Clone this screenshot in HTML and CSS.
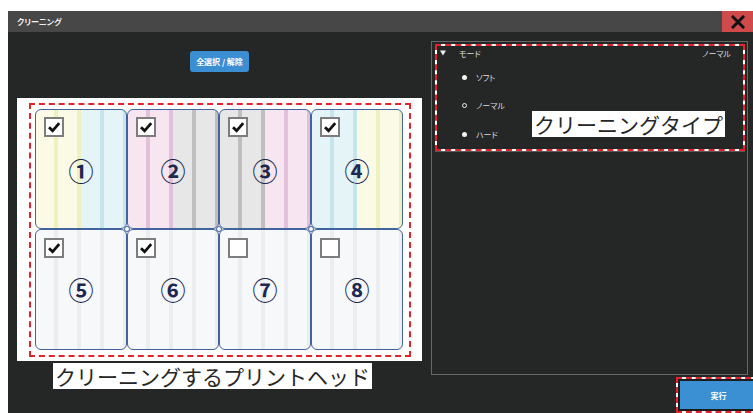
FILE: index.html
```html
<!DOCTYPE html>
<html lang="ja">
<head>
<meta charset="utf-8">
<title>クリーニング</title>
<link rel="stylesheet" href="styles.css">
</head>
<body>
<div class="app">
  <header class="titlebar">
    <span class="title">クリーニング</span>
    <button class="close" aria-label="閉じる">
      <svg width="14" height="14" viewBox="0 0 14 14"><path d="M2 2 L12 12 M12 2 L2 12" stroke="#111" stroke-width="3" stroke-linecap="square" fill="none"/></svg>
    </button>
  </header>
  <div class="main">
    <section class="left">
      <button class="btn-select">全選択 / 解除</button>
      <div class="canvas">
        <div class="mark heads-mark">
          <div class="heads">
            <div class="head h1"><span class="check on"><svg viewBox="0 0 16 16"><path d="M3 8.2 L6.6 11.8 L13.2 4.2"/></svg></span><div class="num">①</div></div>
            <div class="head h2"><span class="check on"><svg viewBox="0 0 16 16"><path d="M3 8.2 L6.6 11.8 L13.2 4.2"/></svg></span><div class="num">②</div></div>
            <div class="head h3"><span class="check on"><svg viewBox="0 0 16 16"><path d="M3 8.2 L6.6 11.8 L13.2 4.2"/></svg></span><div class="num">③</div></div>
            <div class="head h4"><span class="check on"><svg viewBox="0 0 16 16"><path d="M3 8.2 L6.6 11.8 L13.2 4.2"/></svg></span><div class="num">④</div></div>
            <div class="head blank"><span class="check on"><svg viewBox="0 0 16 16"><path d="M3 8.2 L6.6 11.8 L13.2 4.2"/></svg></span><div class="num">⑤</div></div>
            <div class="head blank"><span class="check on"><svg viewBox="0 0 16 16"><path d="M3 8.2 L6.6 11.8 L13.2 4.2"/></svg></span><div class="num">⑥</div></div>
            <div class="head blank"><span class="check"></span><div class="num">⑦</div></div>
            <div class="head blank"><span class="check"></span><div class="num">⑧</div></div>
            <span class="joint j1"></span>
            <span class="joint j2"></span>
            <span class="joint j3"></span>
          </div>
        </div>
      </div>
      <div class="note note-heads">クリーニングするプリントヘッド</div>
    </section>
    <section class="right">
      <div class="panel">
        <div class="mode-wrap">
          <div class="mark mode">
            <div class="mode-head">
              <svg class="tri" width="6" height="6" viewBox="0 0 6 6"><polygon points="0,0.5 6,0.5 3,5.5" fill="#eee"/></svg>
              <span class="mode-name">モード</span>
              <span class="mode-val">ノーマル</span>
            </div>
            <ul class="radios">
              <li class="radio"><span class="dot"></span>ソフト</li>
              <li class="radio"><span class="dot ring"></span>ノーマル</li>
              <li class="radio"><span class="dot"></span>ハード</li>
            </ul>
            <div class="note note-type">クリーニングタイプ</div>
          </div>
        </div>
      </div>
      <div class="mark exec-wrap"><button class="exec">実行</button></div>
    </section>
  </div>
</div>
</body>
</html>
```
FILE: styles.css
```css
body {
  margin: 0;
  padding: 11px 0 0 8px;
  background: #ffffff;
  font-family: "Noto Sans CJK JP", "Noto Sans", sans-serif;
  overflow: hidden;
}

.app {
  width: 745px;
  height: 402px;
  background: #252626;
  overflow: hidden;
}

.titlebar {
  height: 21px;
  background: #474747;
  display: flex;
  align-items: center;
  justify-content: space-between;
}

.title {
  color: #f0f0f0;
  font-size: 8px;
  font-weight: 700;
  padding-left: 9px;
  font-feature-settings: "palt" 1;
}

.close {
  width: 31px;
  height: 21px;
  padding: 0;
  border: 0;
  background: #cf4b4b;
  display: flex;
  align-items: center;
  justify-content: center;
}

.main {
  display: flex;
}

.left {
  width: 423px;
  flex: none;
  padding-left: 9px;
  box-sizing: border-box;
}

.btn-select {
  display: block;
  margin: 19px 0 0 173px;
  width: 59px;
  height: 21px;
  padding: 0;
  border: 0;
  border-radius: 3px;
  background: #3b8ed1;
  color: #ffffff;
  font-family: "Noto Sans CJK JP", sans-serif;
  font-size: 8px;
  font-weight: 700;
}

.canvas {
  margin-top: 26px;
  width: 405px;
  height: 263px;
  box-sizing: border-box;
  padding: 5px 0 0 12px;
  background: #ffffff;
}

.mark {
  border: 2px solid #ffffff;
  outline: 2px dashed #e4222b;
  outline-offset: -2px;
}

.heads-mark {
  width: 382px;
  height: 254px;
  box-sizing: border-box;
  padding: 4px 0 0 4px;
}

.heads {
  position: relative;
  display: grid;
  grid-template-columns: repeat(4, 92px);
  grid-template-rows: 120px 121px;
}

.head {
  box-sizing: border-box;
  border: 1.5px solid #42639e;
  border-radius: 6px;
  padding-top: 7px;
  background-origin: border-box;
}

.h1 {
  background-image: linear-gradient(to right,
    #fafae6 0 19px, #eef0bd 19px 23px, #fafae6 23px 42px, #eef0bd 42px 46px,
    #e5f4f6 46px 65px, #c3e5eb 65px 69px, #e5f4f6 69px 88px, #c3e5eb 88px 92px);
}

.h2 {
  background-image: linear-gradient(to right,
    #f7e5f0 0 19px, #e2bfda 19px 23px, #f7e5f0 23px 42px, #e2bfda 42px 46px,
    #e7e7e7 46px 65px, #bfbfbf 65px 69px, #e7e7e7 69px 88px, #bfbfbf 88px 92px);
}

.h3 {
  background-image: linear-gradient(to right,
    #e7e7e7 0 19px, #bfbfbf 19px 23px, #e7e7e7 23px 42px, #bfbfbf 42px 46px,
    #f7e5f0 46px 65px, #e2bfda 65px 69px, #f7e5f0 69px 88px, #e2bfda 88px 92px);
}

.h4 {
  background-image: linear-gradient(to right,
    #e5f4f6 0 19px, #c3e5eb 19px 23px, #e5f4f6 23px 42px, #c3e5eb 42px 46px,
    #fafae6 46px 65px, #eef0bd 65px 69px, #fafae6 69px 88px, #eef0bd 88px 92px);
}

.blank {
  padding-top: 8px;
  background-image: linear-gradient(to right,
    #f7f8fa 0 19px, #ebedf1 19px 23px, #f7f8fa 23px 42px, #ebedf1 42px 46px,
    #f7f8fa 46px 65px, #ebedf1 65px 69px, #f7f8fa 69px 88px, #ebedf1 88px 92px);
}

.check {
  display: block;
  width: 20px;
  height: 20px;
  margin-left: 8px;
  box-sizing: border-box;
  border: 2px solid #7d7d7d;
  background: #ffffff;
}

.check svg {
  display: block;
  width: 16px;
  height: 16px;
}

.check path {
  fill: none;
  stroke: #111111;
  stroke-width: 2.8;
}

.num {
  margin-top: 18px;
  text-align: center;
  font-size: 25px;
  line-height: 30px;
  font-weight: 700;
  color: #1c2850;
}

.blank .num {
  margin-top: 16px;
}

.joint {
  position: absolute;
  top: 117px;
  width: 6px;
  height: 6px;
  box-sizing: border-box;
  border-radius: 50%;
  background: #ffffff;
  border: 1.3px solid #42639e;
}

.j1 { left: 89px; }
.j2 { left: 181px; }
.j3 { left: 273px; }

.note {
  background: #ffffff;
  color: #262626;
  font-size: 21px;
  line-height: 26px;
  padding: 0 2px;
  font-weight: 400;
  white-space: nowrap;
  font-feature-settings: normal;
}

.note-heads {
  display: inline-block;
  margin: 2px 0 0 36px;
}

.right {
  flex: none;
  width: 322px;
  padding-top: 9px;
}

.panel {
  width: 317px;
  height: 334px;
  box-sizing: border-box;
  border: 1px solid #676767;
  padding: 2px 2px 0 3px;
}

.mode-wrap {
  border-bottom: 1px solid #595959;
}

.mode {
  position: relative;
  height: 107px;
  box-sizing: border-box;
  padding-top: 1px;
  color: #dddddd;
}

.mode-head {
  display: flex;
  align-items: center;
  height: 12px;
  font-size: 8px;
  font-feature-settings: "palt" 1;
}

.tri {
  display: block;
  margin-left: 3px;
}

.mode-name {
  margin-left: 13px;
}

.mode-val {
  margin-left: auto;
  margin-right: 12px;
}

.radios {
  list-style: none;
  margin: 12px 0 0;
  padding: 0;
  display: flex;
  flex-direction: column;
  gap: 16.5px;
  font-feature-settings: "palt" 1;
}

.radio {
  display: flex;
  align-items: center;
  height: 12px;
  font-size: 8px;
  padding-left: 25px;
}

.dot {
  width: 5px;
  height: 5px;
  box-sizing: border-box;
  border-radius: 50%;
  background: #f2f2f2;
  margin-right: 9px;
}

.dot.ring {
  background: transparent;
  border: 1.5px solid #eeeeee;
}

.note-type {
  position: absolute;
  left: 95px;
  top: 65px;
}

.exec-wrap {
  margin: 2px 0 0 245px;
  width: 85px;
  height: 36px;
  box-sizing: border-box;
}

.exec {
  display: block;
  width: 100%;
  height: 100%;
  padding: 0;
  border: 2px solid #1d1d1d;
  background: #3a90d2;
  color: #ffffff;
  font-family: "Noto Sans CJK JP", sans-serif;
  font-size: 8px;
  font-weight: 700;
}
```
